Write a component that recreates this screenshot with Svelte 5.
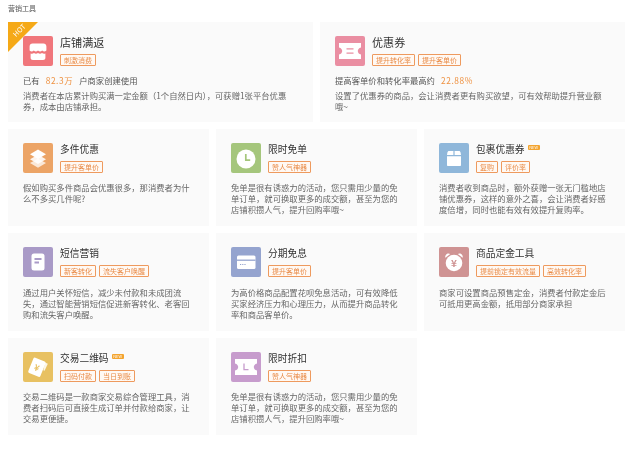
<script>
  const cards = [
    { wide: true, hot: true, icon: 'shop', color: '#f0767b', title: '店铺满返', tags: ['刺激消费'], pre: '已有', hi: '82.3万', post: '户商家创建使用', desc: '消费者在本店累计购买满一定金额（1个自然日内），可获赠1张平台优惠券，成本由店铺承担。' },
    { wide: true, icon: 'ticket', color: '#ea8ea2', title: '优惠券', tags: ['提升转化率', '提升客单价'], pre: '提高客单价和转化率最高约', hi: '22.88%', post: '', desc: '设置了优惠券的商品，会让消费者更有购买欲望，可有效帮助提升营业额哦~' },
    { icon: 'layers', color: '#eca466', title: '多件优惠', tags: ['提升客单价'], desc: '假如购买多件商品会优惠很多，那消费者为什么不多买几件呢?' },
    { icon: 'clock', color: '#a5c67c', title: '限时免单', tags: ['赞人气神器'], desc: '免单是很有诱惑力的活动，您只需用少量的免单订单，就可换取更多的成交额，甚至为您的店铺积攒人气，提升回购率哦~' },
    { icon: 'box', color: '#8fb7da', title: '包裹优惠券', badge: true, tags: ['复购', '评价率'], desc: '消费者收到商品时，额外获赠一张无门槛地店铺优惠券，这样的意外之喜，会让消费者好感度倍增，同时也能有效有效提升复购率。' },
    { icon: 'note', color: '#a99ac7', title: '短信营销', tags: ['新客转化', '流失客户唤醒'], desc: '通过用户关怀短信，减少未付款和未成团流失，通过智能营销短信促进新客转化、老客回购和流失客户唤醒。' },
    { icon: 'card', color: '#95a4cf', title: '分期免息', tags: ['提升客单价'], desc: '为高价格商品配置花呗免息活动，可有效降低买家经济压力和心理压力，从而提升商品转化率和商品客单价。' },
    { icon: 'alarm', color: '#cf9393', title: '商品定金工具', tags: ['提前锁定有效流量', '高效转化率'], desc: '商家可设置商品预售定金，消费者付款定金后可抵用更高金额，抵用部分商家承担' },
    { icon: 'qr', color: '#e8c162', title: '交易二维码', badge: true, tags: ['扫码付款', '当日到账'], desc: '交易二维码是一款商家交易综合管理工具，消费者扫码后可直接生成订单并付款给商家，让交易更便捷。' },
    { icon: 'discount', color: '#c79ccd', title: '限时折扣', tags: ['赞人气神器'], desc: '免单是很有诱惑力的活动，您只需用少量的免单订单，就可换取更多的成交额，甚至为您的店铺积攒人气，提升回购率哦~' }
  ];
</script>

{#snippet glyph(name, color)}
  <svg viewBox="0 0 30 30" width="30" height="30" aria-hidden="true">
    {#if name === 'shop'}
      <path fill="#fff" d="M9.500 7.500h11c1.600 0 2.900 1.300 2.900 2.900v4.200c-1.400 1.300-2.800 1.300-4.200 0-1.400 1.300-2.800 1.300-4.200 0-1.400 1.300-2.800 1.300-4.200 0-1.400 1.300-2.800 1.300-4.200 0v-4.200c0-1.600 1.300-2.900 2.900-2.900z"/>
      <path fill="#fff" d="M7.600 17.400c1.200.5 2.400.3 3.400-.4 1.300.9 2.700.9 4 0 1.300.9 2.700.9 4 0 1 .7 2.200.9 3.400.4v4.400c0 1.300-1 2.300-2.300 2.300H9.900c-1.300 0-2.300-1-2.300-2.300z"/>
    {:else if name === 'ticket'}
      <path fill="#fff" d="M4 7h22v4.500c-2.200.5-3.200 2-3.200 3.500s1 3 3.200 3.500V23H4v-4.500c2.200-.5 3.200-2 3.200-3.500S6.200 12 4 11.500z"/>
      <path stroke={color} stroke-width="1.300" d="M11.500 12.800h7M11.500 17.200h7"/>
    {:else if name === 'layers'}
      <path fill="#fff" opacity=".75" d="M15 15.800l8 4.200-8 4.800-8-4.800z"/>
      <path fill="#fff" opacity=".88" d="M15 11.800l8 4.400-8 4.800-8-4.800z"/>
      <path fill="#fff" d="M15 6.500l8 4.800-8 4.800-8-4.800z"/>
    {:else if name === 'clock'}
      <circle cx="15" cy="16" r="9.500" fill="#fff"/>
      <path fill="none" stroke={color} stroke-width="1.700" d="M14.800 11v6.200h4.400"/>
    {:else if name === 'box'}
      <path fill="#fff" d="M10 8h4.400v4H8l.4-2.400C8.600 8.600 9.200 8 10 8zM15.600 8H20c.8 0 1.400.6 1.600 1.600L22 12h-6.400zM8 13.200h14V22c0 .6-.4 1-1 1H9c-.6 0-1-.4-1-1z"/>
    {:else if name === 'note'}
      <rect x="8.500" y="6.500" width="13" height="17" rx="2.500" fill="#fff"/>
      <path stroke={color} stroke-width="1.800" d="M11.500 12h7M11.500 15.500h4.500"/>
    {:else if name === 'card'}
      <rect x="6" y="8.500" width="18.500" height="13.500" rx="1.500" fill="#fff"/>
      <path stroke={color} stroke-width="1.300" d="M6 13.200h18.500"/>
      <path stroke={color} stroke-width="1" stroke-dasharray="1.200 1" d="M9 17.500h6.500"/>
    {:else if name === 'alarm'}
      <path fill="#fff" d="M7 7.800c1-1.400 2.800-1.700 4.200-.8l-4.800 3.800c-.4-1-.1-2.100.6-3zM23 7.800c-1-1.400-2.800-1.700-4.200-.8l4.800 3.800c.4-1 .1-2.100-.6-3z"/>
      <circle cx="15" cy="16" r="8.300" fill="#fff"/>
      <text x="15" y="19.500" text-anchor="middle" font-size="10" font-weight="700" fill={color}>¥</text>
    {:else if name === 'qr'}
      <path fill="#fff" opacity=".85" d="M22 10.500l2.800 1.300-3.200 7-1.300-.6z"/>
      <g transform="rotate(22 14 15)">
        <rect x="7.500" y="7" width="13" height="16.500" rx="1.500" fill="#fff"/>
        <text x="14" y="19" text-anchor="middle" font-size="8.500" font-weight="700" fill={color}>¥</text>
      </g>
    {:else if name === 'discount'}
      <path fill="#fff" d="M4 7h22v4.500c-2.200.5-3.200 2-3.200 3.500s1 3 3.200 3.500V23H4v-4.500c2.200-.5 3.200-2 3.200-3.500S6.200 12 4 11.500z"/>
      <path fill="none" stroke={color} stroke-width="1.300" d="M13 11.500v6.200h4.500"/>
    {/if}
  </svg>
{/snippet}

<main class="page">
  <h1>营销工具</h1>
  <div class="grid">
    {#each cards as c}
      <section class="card" class:wide={c.wide}>
        {#if c.hot}<div class="hot"><span>HOT</span></div>{/if}
        <div class="head">
          <div class="icon" style:background={c.color}>{@render glyph(c.icon, c.color)}</div>
          <div class="meta">
            <div class="title">{c.title}{#if c.badge}<span class="badge">NEW</span>{/if}</div>
            <div class="tags">
              {#each c.tags as t}<span class="tag">{t}</span>{/each}
            </div>
          </div>
        </div>
        {#if c.pre}
          <p class="stat">{c.pre}<b>{c.hi}</b>{c.post}</p>
        {/if}
        <p class="desc" class:after={c.pre}>{c.desc}</p>
      </section>
    {/each}
  </div>
</main>

<style>
  :global(body) {
    margin: 0;
    background: #fff;
  }
  .page {
    width: 617px;
    padding-left: 8px;
    font-family: "Noto Sans CJK SC", "Liberation Sans", sans-serif;
    filter: blur(0.3px);
  }
  h1 {
    margin: 0;
    height: 22px;
    padding-top: 3px;
    box-sizing: border-box;
    font-size: 7px;
    line-height: 10px;
    font-weight: 400;
    color: #555;
  }
  .grid {
    display: grid;
    grid-template-columns: repeat(6, 1fr);
    column-gap: 7px;
    row-gap: 6.7px;
  }
  .card {
    position: relative;
    grid-column: span 2;
    background: #fafafa;
    padding: 14px 15px 0;
    min-height: 97.8px;
    box-sizing: border-box;
    overflow: hidden;
  }
  .card.wide {
    grid-column: span 3;
    min-height: 100px;
    padding-right: 16px;
  }
  .hot {
    position: absolute;
    left: 0;
    top: 0;
    width: 30px;
    height: 30px;
    background: #f5a917;
    clip-path: polygon(0 0, 100% 0, 0 100%);
  }
  .hot span {
    position: absolute;
    left: 1px;
    top: 3px;
    width: 20px;
    text-align: center;
    font-size: 7px;
    line-height: 10px;
    color: #fff;
    transform: rotate(-45deg);
  }
  .head {
    display: flex;
    gap: 7px;
  }
  .icon {
    width: 30px;
    height: 30px;
    flex: none;
    border-radius: 2px;
  }
  .icon svg {
    display: block;
  }
  .meta {
    display: flex;
    flex-direction: column;
    justify-content: space-between;
    height: 30px;
  }
  .title {
    display: flex;
    align-items: flex-start;
    gap: 3px;
    font-size: 9.72px;
    line-height: 12px;
    color: #333;
  }
  .wide .title {
    font-size: 11.1px;
  }
  .badge {
    width: 12px;
    height: 5px;
    margin-top: 2px;
    border-radius: 1px;
    background: #f3a42f;
    color: #fff;
    font-size: 4px;
    line-height: 5px;
    text-align: center;
    overflow: hidden;
  }
  .tags {
    display: flex;
    gap: 3px;
  }
  .tag {
    height: 12px;
    box-sizing: border-box;
    padding: 0 3px;
    border: 0.7px solid #ee9a5e;
    border-radius: 1px;
    background: #fff9f4;
    color: #e98b47;
    font-size: 7px;
    line-height: 10.6px;
    white-space: nowrap;
  }
  p {
    margin: 0;
    font-size: 8.33px;
    line-height: 11.1px;
    color: #666;
  }
  .stat {
    margin-top: 8.5px;
    color: #555;
  }
  .stat b {
    margin: 0 6px;
    font-weight: 400;
    color: #ee9140;
    letter-spacing: 0.6px;
  }
  .desc {
    margin-top: 9.5px;
  }
  .desc.after {
    margin-top: 4px;
  }
</style>
